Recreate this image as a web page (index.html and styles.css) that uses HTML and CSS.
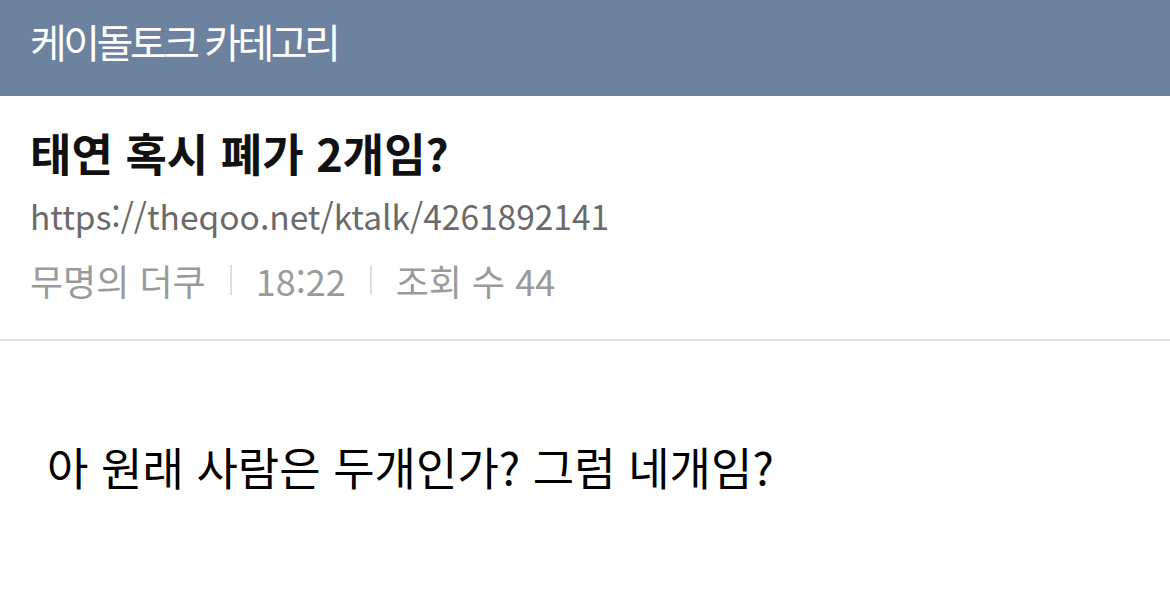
FILE: index.html
```html
<!DOCTYPE html>
<html lang="ko">
<head>
<meta charset="utf-8">
<title>케이돌토크 카테고리</title>
<link rel="stylesheet" href="styles.css">
</head>
<body>
<header class="topbar">
  <span class="topbar-title">케이돌토크 카테고리</span>
</header>
<section class="post-head">
  <h1 class="post-title">태연 혹시 폐가 2개임?</h1>
  <div class="post-url">https://theqoo.net/ktalk/4261892141</div>
  <div class="post-meta">
    <span>무명의 더쿠</span>
    <span class="sep"></span>
    <span>18:22</span>
    <span class="sep"></span>
    <span>조회 수 44</span>
  </div>
</section>
<main class="post-body">
  <p class="post-text">아 원래 사람은 두개인가? 그럼 네개임?</p>
</main>
</body>
</html>
```
FILE: styles.css
```css
* { box-sizing: border-box; }
html, body {
  margin: 0;
  padding: 0;
  background: #ffffff;
  font-family: "Noto Sans CJK KR", "Noto Sans", sans-serif;
}
.topbar {
  height: 96px;
  background: #6d829f;
  display: flex;
  align-items: center;
  padding: 0 0 14px 30px;
}
.topbar-title {
  color: #ffffff;
  font-size: 40px;
  font-weight: 400;
  letter-spacing: -3.5px;
  line-height: 1;
}
.post-head {
  padding: 32px 30px 0 30px;
  height: 245px;
  border-bottom: 2px solid #e0e0e0;
}
.post-title {
  margin: 0;
  font-size: 45px;
  font-weight: 700;
  color: #111;
  line-height: 50px;
}
.post-url {
  margin-top: 18px;
  font-size: 33.5px;
  color: #6a6a6a;
  line-height: 40px;
}
.post-meta {
  margin-top: 24px;
  display: flex;
  align-items: center;
  gap: 24px;
  font-size: 36px;
  color: #9a9a9a;
  line-height: 40px;
}
.sep {
  width: 2px;
  height: 30px;
  background: #dddddd;
}
.post-body {
  padding: 98px 47px 0 47px;
}
.post-text {
  margin: 0;
  font-size: 45px;
  color: #000;
  line-height: 56px;
}
```
